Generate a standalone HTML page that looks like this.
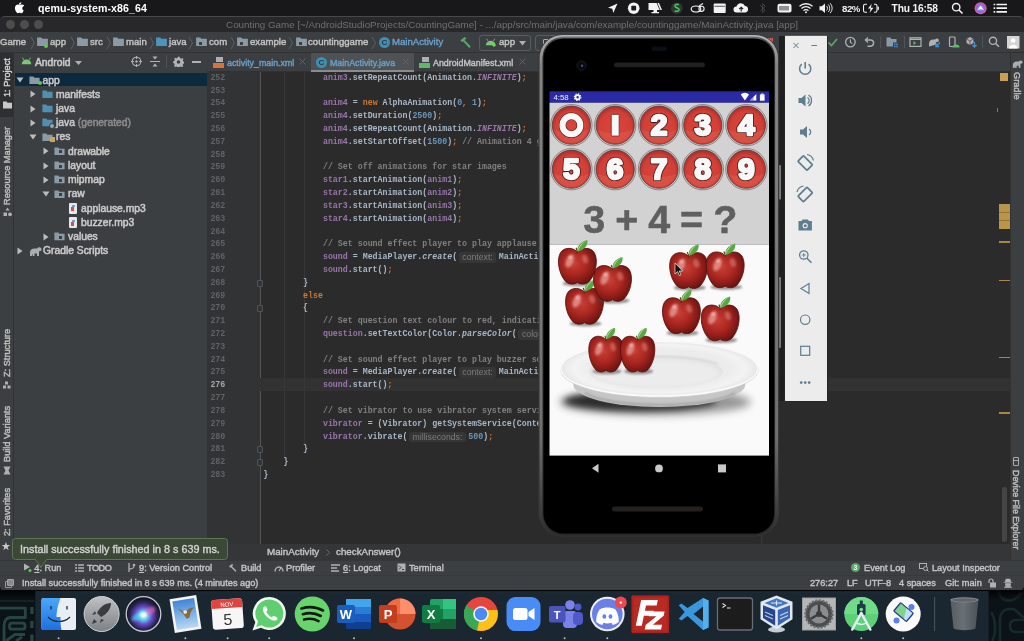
<!DOCTYPE html>
<html><head><meta charset="utf-8">
<style>
*{box-sizing:border-box;margin:0;padding:0}
html,body{width:1024px;height:641px;overflow:hidden;background:#0f1c22;font-family:"Liberation Sans",sans-serif;}
.abs{position:absolute}
#menubar{position:absolute;left:0;top:0;width:1024px;height:16px;background:#18181a;color:#fff;font-size:10.6px;font-weight:bold}
#win{position:absolute;left:0;top:16px;width:1024px;height:575px;background:#3c3f41;border-radius:5px 5px 6px 6px;overflow:hidden;border-top:1px solid #484848;z-index:0}
#title{position:absolute;left:0;top:0;width:1024px;height:15px;background:#28282a;border-top:0px solid #4a4a4a;color:#707070;font-size:9.8px;text-align:center;line-height:16px}
.tl{position:absolute;top:3px;width:9px;height:9px;border-radius:50%;background:#4d4d4d}
#nav{position:absolute;left:0;top:15px;width:1024px;height:20px;background:#3c3f41;border-top:1px solid #3c3f41;color:#bbb;font-size:9.2px;font-weight:bold}
.t{position:absolute;white-space:nowrap;font-weight:normal;color:#c4c4c4;font-size:9.2px;line-height:12px;-webkit-text-stroke:0.4px}
.tr{font-size:10.3px;-webkit-text-stroke:0.55px;color:#c8c8c8}
.nv{font-size:9.6px}
.vt{-webkit-text-stroke:0.45px;color:#bdbdbd;z-index:3}
#code{position:absolute;left:243.4px;top:54.8px;font-family:"Liberation Mono",monospace;font-size:8.29px;line-height:12.816px;color:#a9b7c6;white-space:pre;font-weight:bold}
#code i{color:#9876aa}#code em{font-style:italic}
.k{color:#cc7832}.n{color:#6897bb}.f{color:#9876aa}.c{color:#808080}
.h{font-family:"Liberation Sans",sans-serif;font-size:8.700px;color:#7c7c7c;background:#363636;border-radius:2.5px;font-weight:normal;display:inline-block;line-height:10.500px;height:10.500px;padding:0 3.500px;margin:0 2.5px 0 1.700px;vertical-align:top;position:relative;top:1px;white-space:nowrap}
#ln{position:absolute;left:207px;top:54.8px;width:18.3px;text-align:right;font-family:"Liberation Mono",monospace;font-size:8.29px;line-height:12.816px;color:#606366;white-space:pre;font-weight:bold}
#root{position:absolute;left:0;top:0;width:1024px;height:641px;overflow:hidden;will-change:transform;transform:translateZ(0)}
</style></head><body><div id="root">

<!-- wallpaper hints -->
<div class="abs" style="left:0;top:591px;width:1024px;height:50px;background:#0e1a20"></div>

<!-- MENUBAR -->
<div id="menubar">
  <svg class="abs" style="left:14px;top:2px" width="11" height="12" viewBox="0 0 170 200"><path fill="#fff" d="M150 69c-1 1-19 11-19 34 0 27 23 36 24 36 0 1-4 13-12 26-8 11-16 22-28 22s-15-7-29-7c-13 0-18 7-29 7s-19-10-28-23C18 149 9 124 9 101c0-38 25-58 49-58 13 0 24 9 32 9s20-9 35-9c6 0 26 1 39 20zM105 34c6-7 10-17 10-27 0-1 0-3-0-4-10 0-22 7-29 15-6 6-11 16-11 26 0 2 0 3 0 4 1 0 2 0 3 0 9 0 20-6 27-14z"/></svg>
  <span class="abs" style="left:38px;top:2px;line-height:13px;letter-spacing:0.1px">qemu-system-x86_64</span>
  <svg class="abs" style="left:600px;top:0" width="424" height="17" viewBox="600 0 424 17" fill="#f2f2f2">
<path d="M617.500 3.500l-9.500 4.200 4.300 1 1 4.300z"/>
<circle cx="633.700" cy="8.200" r="5.800"/><rect x="631.300" y="5.800" width="4.800" height="4.800" rx="0.800" fill="#18181a"/>
<path d="M648.500 3h10.500l3 7h-13.500zM653.500 10h3.500v2h2v1.200h-7.500v-1.200h2z"/><path d="M657 3l3 7" stroke="#18181a" stroke-width="0.800"/>
<circle cx="676.700" cy="8.200" r="5.800" fill="#2c3a30"/><path d="M678.800 4.800c-2.500-1.200-4.500 0.200-3.600 1.800 0.700 1.200 3.400 1.200 3.800 2.800 0.400 1.600-2 2.600-4.300 1.400" fill="none" stroke="#4fc56a" stroke-width="1.500"/>
<ellipse cx="696" cy="9" rx="4.800" ry="3" fill="none" stroke="#f2f2f2" stroke-width="1.200"/><circle cx="701.500" cy="8.800" r="2.600" fill="none" stroke="#f2f2f2" stroke-width="1.100"/><path d="M699 6l4-2.500" stroke="#f2f2f2" stroke-width="1.100"/>
<rect x="713.700" y="3.500" width="12" height="9.500" rx="1"/><path d="M714.500 6.300h10.500" stroke="#18181a" stroke-width="0.700"/>
<path d="M736.500 12.500a3 3 0 0 1 0-6 4.500 4.500 0 0 1 8.500-0.500 3.300 3.300 0 0 1 0.500 6.500z"/><path d="M741.200 11.500v-4M739.200 9.200l2-2 2 2" fill="none" stroke="#18181a" stroke-width="1.100"/>
<path d="M760.200 5.200l5 5-2.500 2.500v-9l2.500 2.500-5 5" fill="none" stroke="#4a4a4a" stroke-width="0.900"/>
<rect x="777.500" y="3.800" width="14" height="8.800" rx="2"/><path d="M780 6v4.500M782 6v4.500M784 6v4.500M786 6v4.500M788 6v4.500" stroke="#18181a" stroke-width="0.900"/>
<path d="M799.500 6.300a9.500 9.500 0 0 1 13 0M801.500 8.500a6.500 6.500 0 0 1 9 0M803.500 10.600a3.500 3.500 0 0 1 5 0" fill="none" stroke="#f2f2f2" stroke-width="1.300"/><circle cx="806" cy="12.300" r="1"/>
<path d="M819.500 6.200h2.300l3.200-2.700v9.500l-3.200-2.700h-2.300z"/><path d="M826.500 6a3 3 0 0 1 0 4.500M828.300 4.500a5.500 5.500 0 0 1 0 7.500M830.200 3.200a8 8 0 0 1 0 10" fill="none" stroke="#f2f2f2" stroke-width="0.900"/>
<rect x="863.500" y="4.200" width="13.500" height="8" rx="1.800" fill="none" stroke="#f2f2f2" stroke-width="1.100"/><rect x="877.600" y="6.500" width="1.300" height="3.400" rx="0.600"/><rect x="867" y="3" width="7" height="10.500" fill="#18181a"/><path d="M871.800 3.800l-3.800 4.800h2.600l-1 4.200 3.900-5h-2.700z"/>
<circle cx="956.200" cy="7.200" r="3.700" fill="none" stroke="#f2f2f2" stroke-width="1.400"/><path d="M959 10l3.500 3.500" stroke="#f2f2f2" stroke-width="1.600"/>
<defs><radialGradient id="siri" cx="0.5" cy="0.5" r="0.5"><stop offset="0" stop-color="#f4f4ff"/><stop offset="0.35" stop-color="#7a8cf0"/><stop offset="0.7" stop-color="#a45ad0"/><stop offset="1" stop-color="#d56a9a"/></radialGradient></defs>
<circle cx="980.600" cy="8.200" r="6" fill="url(#siri)"/><path d="M977 10.500l3.600-5 3.600 5-3.600-1.800z" fill="#fff" opacity="0.850"/>
<path d="M996.500 4.500h10.500M996.500 8.200h10.500M996.500 11.900h10.500" stroke="#f2f2f2" stroke-width="1.700"/><path d="M993.600 4.500h1.600M993.600 8.200h1.600M993.600 11.900h1.600" stroke="#f2f2f2" stroke-width="1.700"/>
<text x="842" y="11.800" font-family="Liberation Sans" font-weight="bold" font-size="9.600" letter-spacing="-0.400">82%</text>
<text x="891.600" y="12" font-family="Liberation Sans" font-weight="bold" font-size="10.200" letter-spacing="-0.150">Thu 16:58</text>
</svg>
</div>

<!-- WINDOW -->
<div id="win">
  <div id="title">Counting Game [~/AndroidStudioProjects/CountingGame] - .../app/src/main/java/com/example/countinggame/MainActivity.java [app]
    <div class="tl" style="left:6px"></div><div class="tl" style="left:20px"></div><div class="tl" style="left:34px"></div>
  </div>
  <div id="nav">
<svg width="0" height="0" style="position:absolute"><defs>
<symbol id="fold" viewBox="0 0 12 10"><path d="M0 0.5h4.6l1.2 1.5H12V10H0z"/></symbol>
<symbol id="chev" viewBox="0 0 6 14"><path d="M1 1l3.5 6L1 13" fill="none" stroke="#5e6163" stroke-width="1"/></symbol>
</defs></svg>
<span class="t nv" style="left:0px;top:3.300px">Game</span>
<svg class="abs" style="left:30px;top:3px" width="6" height="14"><use href="#chev"/></svg>
<svg class="abs" style="left:37px;top:4.300px" width="11" height="9" fill="#8b9aa5"><use href="#fold"/></svg><div class="abs" style="left:44px;top:11px;width:4px;height:4px;border-radius:50%;background:#62c554"></div>
<span class="t nv" style="left:50px;top:3.300px">app</span>
<svg class="abs" style="left:70px;top:3px" width="6" height="14"><use href="#chev"/></svg>
<svg class="abs" style="left:77px;top:4.300px" width="11" height="9" fill="#8b9aa5"><use href="#fold"/></svg>
<span class="t nv" style="left:90px;top:3.300px">src</span>
<svg class="abs" style="left:106px;top:3px" width="6" height="14"><use href="#chev"/></svg>
<svg class="abs" style="left:113px;top:4.300px" width="11" height="9" fill="#8b9aa5"><use href="#fold"/></svg>
<span class="t nv" style="left:126px;top:3.300px">main</span>
<svg class="abs" style="left:149px;top:3px" width="6" height="14"><use href="#chev"/></svg>
<svg class="abs" style="left:156px;top:4.300px" width="11" height="9" fill="#4f94bd"><use href="#fold"/></svg>
<span class="t nv" style="left:169px;top:3.300px">java</span>
<svg class="abs" style="left:188px;top:3px" width="6" height="14"><use href="#chev"/></svg>
<svg class="abs" style="left:196px;top:4.300px" width="11" height="9" fill="#8b9aa5"><use href="#fold"/></svg><div class="abs" style="left:199px;top:9px;width:3px;height:3px;background:#3c3f41"></div>
<span class="t nv" style="left:209px;top:3.300px">com</span>
<svg class="abs" style="left:230px;top:3px" width="6" height="14"><use href="#chev"/></svg>
<svg class="abs" style="left:237px;top:4.300px" width="11" height="9" fill="#8b9aa5"><use href="#fold"/></svg><div class="abs" style="left:240px;top:9px;width:3px;height:3px;background:#3c3f41"></div>
<span class="t nv" style="left:250px;top:3.300px">example</span>
<svg class="abs" style="left:288px;top:3px" width="6" height="14"><use href="#chev"/></svg>
<svg class="abs" style="left:296px;top:4.300px" width="11" height="9" fill="#8b9aa5"><use href="#fold"/></svg><div class="abs" style="left:299px;top:9px;width:3px;height:3px;background:#3c3f41"></div>
<span class="t nv" style="left:308px;top:3.300px">countinggame</span>
<svg class="abs" style="left:371px;top:3px" width="6" height="14"><use href="#chev"/></svg>
<div class="abs" style="left:379px;top:4px;width:11px;height:11px;border-radius:50%;background:#3f8fb5;color:#2f3a40;font-size:8px;font-weight:bold;text-align:center;line-height:11px">C</div>
<span class="t nv" style="left:392px;top:3.300px;color:#6a9fc9">MainActivity</span>
<svg class="abs" style="left:459px;top:3px" width="14" height="13" viewBox="0 0 14 13"><path d="M1.5 4.2L5.6 1l2 1.2-2.1 1.7 6.3 6.5-1.5 1.5L4.1 5.3 3 6.2z" fill="#59a869"/></svg>
<div class="abs" style="left:479px;top:2px;width:52px;height:16px;border:1px solid #5a5d5f;border-radius:3px"></div>
<svg class="abs" style="left:485px;top:5px" width="11.500" height="9" viewBox="0 0 14 11"><path d="M1 9a6 5.5 0 0 1 12 0z" fill="#7bc67b"/><path d="M3.5 3.5L2 1M10.5 3.5L12 1" stroke="#7bc67b" stroke-width="1"/><circle cx="11" cy="9" r="1.8" fill="#62e04f"/></svg>
<span class="t nv" style="left:499px;top:3.300px">app</span>
<svg class="abs" style="left:519px;top:8px" width="7" height="5"><path d="M0 0h7L3.5 4.5z" fill="#b0b0b0"/></svg>
<div class="abs" style="left:535px;top:2px;width:30px;height:16px;border:1px solid #5a5d5f;border-radius:3px"></div><div class="abs" style="left:765px;top:5px;width:8px;height:8px;background:#c75450"></div><div class="abs" style="left:543px;top:5.500px;width:6px;height:8.500px;border:1.200px solid #a8abad;border-radius:1px"></div>
<svg class="abs" style="left:824px;top:-1px" width="200" height="20" viewBox="824 32 200 20" fill="none" stroke="#afb1b3" stroke-width="1.300">
<path d="M828.500 42.500l3 3 5.500-6.500" stroke="#59a869" stroke-width="1.700"/>
<circle cx="850.400" cy="42.100" r="4.800"/><path d="M850.400 39.300v3l2 1.300" stroke-width="1.100"/>
<path d="M866 40h4.500a3 3 0 0 1 0 6.200h-3" stroke-width="1.400"/><path d="M868 37.500l-2.600 2.500 2.600 2.500" stroke-width="1.300"/>
<path d="M880.600 36v12M904.500 36v12M982.600 36v12" stroke="#515355" stroke-width="1"/>
<path d="M886.500 37.500h4l1 1.500h5v7.500h-10z" fill="#8b9aa5" stroke="none"/><rect x="893" y="42.500" width="5" height="5" fill="#3c3f41" stroke="none"/><path d="M894 43.500h1.500v1.500h-1.500zM896.200 43.500h1.500v1.500h-1.500zM894 45.700h1.500v1.500h-1.500zM896.200 45.700h1.500v1.500h-1.500z" fill="#4a90d0" stroke="none"/>
<rect x="910" y="37.800" width="11" height="8.600" stroke-width="1.200"/><path d="M910 39.300h11" stroke-width="1.400"/><path d="M913.300 41l3.200 2-3.200 2z" fill="#59a869" stroke="none"/>
<path d="M929 46.500v-3c0-2.500 2-4 4-4h2c.7-.9 1.900-1.200 2.800-.8.900.4 1.300 1.300 1 2.200-.3.700-.900 1-1.600 1h-1v2.500" fill="#afb1b3" stroke="none"/><path d="M940 42.500l-4 4M936 43.500v3h3" stroke="#3d95d8" stroke-width="1.400"/>
<rect x="949.500" y="37" width="5.500" height="9.500" rx="0.800" stroke-width="1.200"/><path d="M952.500 47.500a3.500 3 0 0 1 7 0z" fill="#59c068" stroke="none"/>
<path d="M966.500 39l3.500-2 3.500 2v4l-3.500 2-3.500-2z" fill="#afb1b3" stroke="none"/><path d="M966.500 39l3.500 2 3.500-2M970 41v4" stroke="#3c3f41" stroke-width="0.700"/><path d="M974.500 42v5M972.500 45l2 2 2-2" stroke="#3d95d8" stroke-width="1.300"/>
<circle cx="993" cy="40.800" r="3.600" stroke-width="1.400"/><path d="M995.700 43.500l3.300 3.300" stroke-width="1.600"/>
<rect x="1007" y="36" width="12.500" height="12.500" fill="#d4d4d4" stroke="none"/><circle cx="1013.200" cy="40.500" r="2.300" fill="#fff" stroke="none"/><path d="M1009 48.500c0-5 8.500-5 8.500 0z" fill="#fff" stroke="none"/>
</svg>
</div>

  <div class="abs" style="left:0;top:35px;width:1024px;height:1px;background:#323232;z-index:3"></div>
  <!-- LEFT STRIP -->
  <div class="abs" style="left:0;top:35px;width:14px;height:508px;background:#3c3f41;border-right:1px solid #323232;z-index:2"></div>
  <div class="abs" style="left:0;top:35px;width:13px;height:65px;background:#2d2f30;z-index:2"></div>
  <div class="t vt" style="left:0.500px;top:80px;transform:rotate(-90deg);transform-origin:0 0;color:#cfcfcf">1: Project</div>
  <svg class="abs" style="left:2.500px;top:84px;z-index:3" width="9" height="8" fill="#c8c8c8"><path d="M0 0.500h3.500l1 1.200H9V7.500H0z"/></svg><svg class="abs" style="left:2.500px;top:190px;z-index:3" width="9" height="10" fill="#b0b0b0"><path d="M4.500 0.500l2 3h-4zM0.500 5.500h3.500v3.500h-3.500z"/><circle cx="7" cy="7.300" r="1.900"/></svg><svg class="abs" style="left:3px;top:364px;z-index:3" width="8" height="8" fill="#b0b0b0"><path d="M0 4.500h3v3h-3zM4.500 4.500h3v3h-3zM2 0.500h3v3h-3z"/></svg><svg class="abs" style="left:3px;top:449px;z-index:3" width="8" height="9" fill="#b0b0b0"><path d="M0.500 0.500h7l-2 4 2 4h-7l2-4z"/></svg>
  <div class="t vt" style="left:0.500px;top:187.700px;transform:rotate(-90deg);transform-origin:0 0">Resource Manager</div>
  <div class="t vt" style="left:0.500px;top:360px;transform:rotate(-90deg);transform-origin:0 0">Z: Structure</div>
  <div class="t vt" style="left:0.500px;top:445px;transform:rotate(-90deg);transform-origin:0 0">Build Variants</div>
  <div class="t vt" style="left:0.500px;top:519px;transform:rotate(-90deg);transform-origin:0 0">2: Favorites</div>
  <div class="abs" style="left:1px;top:523px;color:#c8c8c8;font-size:11px;line-height:12px;z-index:3">&#9733;</div>

  <!-- PROJECT PANEL -->
  <div class="abs" style="left:15px;top:35px;width:192px;height:510px;background:#3c3f41"></div>
  <div class="abs" style="left:15px;top:56px;width:192px;height:13.300px;background:#0d293e"></div>
  <svg class="abs" style="left:21px;top:40px" width="11" height="8" viewBox="0 0 14 10"><path d="M1 9a6 6 0 0 1 12 0z" fill="#7bc67b"/><path d="M3.5 3.5L2 0.8M10.5 3.5L12 0.8" stroke="#7bc67b" stroke-width="1.2"/></svg>
  <span class="t tr" style="left:35px;top:39.500px">Android</span>
  <svg class="abs" style="left:75px;top:44px" width="7" height="4"><path d="M0 0h7L3.5 4z" fill="#b0b0b0"/></svg>
  <svg class="abs" style="left:131px;top:39px" width="11" height="11" viewBox="0 0 11 11"><circle cx="5.5" cy="5.5" r="4.3" fill="none" stroke="#afb1b3" stroke-width="1.1"/><circle cx="5.5" cy="5.5" r="1.2" fill="#afb1b3"/><path d="M5.5 0v3M5.5 8v3M0 5.5h3M8 5.5h3" stroke="#afb1b3" stroke-width="1.1"/></svg>
  <svg class="abs" style="left:150px;top:39px" width="10" height="11" viewBox="0 0 10 11"><path d="M0 5.5h10" stroke="#afb1b3" stroke-width="1.2"/><path d="M2.5 0.5h5L5 3.5zM2.5 10.5h5L5 7.5z" fill="#afb1b3"/></svg>
  <div class="abs" style="left:166px;top:38px;width:1px;height:13px;background:#515151"></div>
  <svg class="abs" style="left:173px;top:39px" width="11" height="11" viewBox="0 0 12 12"><path d="M6 0.5l1.2 0.2.4 1.5 1.3.7 1.5-.6.9 1-.6 1.5.5 1.2 1.3.6v1.3l-1.4.6-.5 1.2.6 1.4-1 .9-1.4-.6-1.3.5-.5 1.4H5.300l-.5-1.400-1.300-.500-1.400.600-.900-1 .600-1.400-.500-1.300L0 7.400V6l1.400-.500.500-1.300-.600-1.400 1-.900 1.400.600 1.200-.600z" fill="#afb1b3"/><circle cx="6" cy="6.600" r="1.900" fill="#3c3f41"/></svg>
  <div class="abs" style="left:192px;top:44px;width:9px;height:1.600px;background:#afb1b3"></div>
  <!-- TREE -->
<svg class="abs" style="left:16px;top:60.0px" width="8" height="6"><path d="M0.500 0.500h7L4 5.500z" fill="#bcbcbc"/></svg>
<svg class="abs" style="left:28.8px;top:58.5px" width="11" height="8.500" preserveAspectRatio="none" fill="#8b9aa5"><use href="#fold"/></svg>
<div class="abs" style="left:38px;top:64.0px;width:4px;height:4px;border-radius:50%;background:#62c554"></div>
<span class="t tr" style="left:42.500px;top:58.0px">app</span>
<svg class="abs" style="left:30px;top:73.2px" width="6" height="8"><path d="M0.500 0.500L5.500 4 0.500 7.500z" fill="#bcbcbc"/></svg>
<svg class="abs" style="left:41.8px;top:72.8px" width="11" height="8.500" preserveAspectRatio="none" fill="#4f8fb0"><use href="#fold"/></svg>
<span class="t tr" style="left:56px;top:71.5px">manifests</span>
<svg class="abs" style="left:30px;top:87.5px" width="6" height="8"><path d="M0.500 0.500L5.500 4 0.500 7.500z" fill="#bcbcbc"/></svg>
<svg class="abs" style="left:41.8px;top:87.0px" width="11" height="8.500" preserveAspectRatio="none" fill="#4f8fb0"><use href="#fold"/></svg>
<span class="t tr" style="left:56px;top:85.7px">java</span>
<svg class="abs" style="left:30px;top:101.8px" width="6" height="8"><path d="M0.500 0.500L5.500 4 0.500 7.500z" fill="#bcbcbc"/></svg>
<svg class="abs" style="left:41.8px;top:101.2px" width="11" height="8.500" preserveAspectRatio="none" fill="#4f8fb0"><use href="#fold"/></svg>
<div class="abs" style="left:49px;top:105.8px;width:6px;height:6px;border-radius:50%;background:#9aa7b0;border:1px solid #3c3f41"></div>
<span class="t tr" style="left:56px;top:99.9px">java <span style="color:#8a8a8a">(generated)</span></span>
<svg class="abs" style="left:29px;top:117.0px" width="8" height="6"><path d="M0.500 0.500h7L4 5.500z" fill="#bcbcbc"/></svg>
<svg class="abs" style="left:41.8px;top:115.5px" width="11" height="8.500" preserveAspectRatio="none" fill="#8b9aa5"><use href="#fold"/></svg>
<div class="abs" style="left:50px;top:120.0px;width:5px;height:5px;background:#c9a464"></div>
<span class="t tr" style="left:56px;top:114.2px">res</span>
<svg class="abs" style="left:43px;top:130.2px" width="6" height="8"><path d="M0.500 0.500L5.500 4 0.500 7.500z" fill="#bcbcbc"/></svg>
<svg class="abs" style="left:53.8px;top:129.8px" width="11" height="8.500" preserveAspectRatio="none" fill="#8b9aa5"><use href="#fold"/></svg>
<div class="abs" style="left:59px;top:133.2px;width:3px;height:3px;background:#3c3f41"></div>
<span class="t tr" style="left:68px;top:128.5px">drawable</span>
<svg class="abs" style="left:43px;top:144.5px" width="6" height="8"><path d="M0.500 0.500L5.500 4 0.500 7.500z" fill="#bcbcbc"/></svg>
<svg class="abs" style="left:53.8px;top:144.0px" width="11" height="8.500" preserveAspectRatio="none" fill="#8b9aa5"><use href="#fold"/></svg>
<div class="abs" style="left:59px;top:147.5px;width:3px;height:3px;background:#3c3f41"></div>
<span class="t tr" style="left:68px;top:142.7px">layout</span>
<svg class="abs" style="left:43px;top:158.8px" width="6" height="8"><path d="M0.500 0.500L5.500 4 0.500 7.500z" fill="#bcbcbc"/></svg>
<svg class="abs" style="left:53.8px;top:158.2px" width="11" height="8.500" preserveAspectRatio="none" fill="#8b9aa5"><use href="#fold"/></svg>
<div class="abs" style="left:59px;top:161.8px;width:3px;height:3px;background:#3c3f41"></div>
<span class="t tr" style="left:68px;top:156.9px">mipmap</span>
<svg class="abs" style="left:42px;top:174.0px" width="8" height="6"><path d="M0.500 0.500h7L4 5.500z" fill="#bcbcbc"/></svg>
<svg class="abs" style="left:53.8px;top:172.5px" width="11" height="8.500" preserveAspectRatio="none" fill="#8b9aa5"><use href="#fold"/></svg>
<div class="abs" style="left:59px;top:176.0px;width:3px;height:3px;background:#3c3f41"></div>
<span class="t tr" style="left:68px;top:171.2px">raw</span>
<div class="abs" style="left:69px;top:185.8px;width:8px;height:11px;background:#e8e8ea;border-radius:1px"></div><div class="abs" style="left:71px;top:190.2px;width:3px;height:4px;background:#c75450"></div><div class="abs" style="left:72px;top:188.2px;width:3px;height:2px;background:#6f9fd8"></div>
<span class="t tr" style="left:81px;top:185.5px">applause.mp3</span>
<div class="abs" style="left:69px;top:200.0px;width:8px;height:11px;background:#e8e8ea;border-radius:1px"></div><div class="abs" style="left:71px;top:204.5px;width:3px;height:4px;background:#c75450"></div><div class="abs" style="left:72px;top:202.5px;width:3px;height:2px;background:#6f9fd8"></div>
<span class="t tr" style="left:81px;top:199.7px">buzzer.mp3</span>
<svg class="abs" style="left:43px;top:215.8px" width="6" height="8"><path d="M0.500 0.500L5.500 4 0.500 7.500z" fill="#bcbcbc"/></svg>
<svg class="abs" style="left:53.8px;top:215.2px" width="11" height="8.500" preserveAspectRatio="none" fill="#8b9aa5"><use href="#fold"/></svg>
<div class="abs" style="left:59px;top:218.8px;width:3px;height:3px;background:#3c3f41"></div>
<span class="t tr" style="left:68px;top:213.9px">values</span>
<svg class="abs" style="left:17px;top:230.0px" width="6" height="8"><path d="M0.500 0.500L5.500 4 0.500 7.500z" fill="#bcbcbc"/></svg>
<svg class="abs" style="left:29px;top:229.5px" width="13" height="10" viewBox="0 0 13 10"><path d="M1 9V5.500C1 3 3 1.500 5.500 1.500h2.500c.8-1 2.200-1.400 3.300-1 1 .4 1.500 1.500 1.200 2.500-.3.800-1 1.200-1.800 1.200l-.7 0V9H8V6.500H5.500V9H3.700V6.800L2.800 9z" fill="#a9aeb2"/></svg>
<span class="t tr" style="left:43px;top:228.2px">Gradle Scripts</span>

  <!-- EDITOR -->
  <div class="abs" style="left:207px;top:35px;width:803px;height:20px;background:#3c3f41;border-bottom:1px solid #323232"></div>
  <div class="abs" style="left:207px;top:55px;width:803px;height:477px;background:#2b2b2b"></div>
  <div class="abs" style="left:207px;top:55px;width:54px;height:477px;background:#313335;border-right:1px solid #555"></div>
  <div class="abs" style="left:260px;top:361.300px;width:750px;height:12.300px;background:#323232"></div>
  <div class="abs" style="left:207px;top:361.300px;width:54px;height:12.300px;background:#313335"></div>
  <div class="abs" style="left:284px;top:55px;width:1px;height:385.500px;background:#373737"></div>
  <div class="abs" style="left:304.300px;top:55px;width:1px;height:372px;background:#373737"></div>
  <div class="abs" style="left:761px;top:55px;width:1px;height:472px;background:#373737"></div>
  <div class="abs" style="left:257px;top:262.8px;width:6px;height:7px;background:#313335;border:1px solid #505254;border-radius:1px"></div><div class="abs" style="left:257px;top:288.4px;width:6px;height:7px;background:#313335;border:1px solid #505254;border-radius:1px"></div><div class="abs" style="left:257px;top:429.4px;width:6px;height:7px;background:#313335;border:1px solid #505254;border-radius:1px"></div><div class="abs" style="left:257px;top:442.2px;width:6px;height:7px;background:#313335;border:1px solid #505254;border-radius:1px"></div>
  <div id="ln">252
253
254
255
256
257
258
259
260
261
262
263
264
265
266
267
268
269
270
271
272
273
274
275
<span style="color:#a7a7a7">276</span>
277
278
279
280
281
282
283</div>
  <div id="code">                <span class="f">anim3</span>.setRepeatCount(Animation.<i>INFINITE</i>)<span class="k">;</span>

                <span class="f">anim4</span> = <span class="k">new</span> AlphaAnimation(<span class="n">0</span><span class="k">,</span> <span class="n">1</span>)<span class="k">;</span>
                <span class="f">anim4</span>.setDuration(<span class="n">2500</span>)<span class="k">;</span>
                <span class="f">anim4</span>.setRepeatCount(Animation.<i>INFINITE</i>)<span class="k">;</span>
                <span class="f">anim4</span>.setStartOffset(<span class="n">1500</span>)<span class="k">;</span> <span class="c">// Animation 4 goes</span>

                <span class="c">// Set off animations for star images</span>
                <span class="f">star1</span>.startAnimation(<span class="f">anim1</span>)<span class="k">;</span>
                <span class="f">star2</span>.startAnimation(<span class="f">anim2</span>)<span class="k">;</span>
                <span class="f">star3</span>.startAnimation(<span class="f">anim3</span>)<span class="k">;</span>
                <span class="f">star4</span>.startAnimation(<span class="f">anim4</span>)<span class="k">;</span>

                <span class="c">// Set sound effect player to play applause sound</span>
                <span class="f">sound</span> = MediaPlayer.<em>create</em>(<span class="h">context:</span>MainActivity
                <span class="f">sound</span>.start()<span class="k">;</span>
            }
            <span class="k">else</span>
            {
                <span class="c">// Set question text colour to red, indicating</span>
                <span class="f">question</span>.setTextColor(Color.<em>parseColor</em>(<span class="h">colorString:</span>

                <span class="c">// Set sound effect player to play buzzer sound</span>
                <span class="f">sound</span> = MediaPlayer.<em>create</em>(<span class="h">context:</span>MainActivity
                <span class="f">sound</span>.start()<span class="k">;</span>

                <span class="c">// Set vibrator to use vibrator system service</span>
                <span class="f">vibrator</span> = (Vibrator) getSystemService(Context.
                <span class="f">vibrator</span>.vibrate(<span class="h">milliseconds:</span><span class="n">500</span>)<span class="k">;</span>
            }
        }
    }</div>
  <!-- tabs -->
  <div class="abs" style="left:310.500px;top:35px;width:103px;height:20px;background:#4e5254;border-bottom:2px solid #8a8d8f"></div>
  <span class="t" style="left:227px;top:39.500px;font-size:8.850px;color:#6a9fc9">activity_main.xml</span>
  <span class="t" style="left:330px;top:39.500px;font-size:8.850px;color:#6a9fc9">MainActivity.java</span>
  <span class="t" style="left:433px;top:39.500px;font-size:8.850px">AndroidManifest.xml</span>
  <div class="abs" style="left:316px;top:39.500px;width:11px;height:11px;border-radius:50%;background:#3f8fb5;color:#2f3a40;font-size:8px;font-weight:bold;text-align:center;line-height:11px">C</div>
  <svg class="abs" style="left:299px;top:41px" width="7" height="7"><path d="M0.500 0.500l6 6M6.500 0.500l-6 6" stroke="#646464" stroke-width="0.900"/></svg>
  <svg class="abs" style="left:402px;top:41px" width="7" height="7"><path d="M0.500 0.500l6 6M6.500 0.500l-6 6" stroke="#646464" stroke-width="0.900"/></svg>
  <svg class="abs" style="left:519px;top:41px" width="7" height="7"><path d="M0.500 0.500l6 6M6.500 0.500l-6 6" stroke="#646464" stroke-width="0.900"/></svg>
  <div class="abs" style="left:213px;top:45.500px;width:11px;height:5px;background:#d8743a"></div>
  <div class="abs" style="left:216px;top:40px;width:6.500px;height:5px;background:#aab0b5"></div>
  <div class="abs" style="left:419px;top:45.500px;width:11px;height:5px;background:#5fb865"></div>
  <div class="abs" style="left:422px;top:40px;width:6.500px;height:5px;background:#aab0b5"></div>

  <!-- RIGHT STRIP -->
  <div class="abs" style="left:1009.500px;top:35px;width:14.500px;height:508px;background:#3c3f41;border-left:1px solid #323232;z-index:2"></div>
  <div class="t vt" style="left:1022.500px;top:55px;transform:rotate(90deg);transform-origin:0 0">Gradle</div>
  <svg class="abs" style="left:1011.500px;top:43px;z-index:3" width="11" height="9" viewBox="0 0 13 10"><path d="M1 9V5.500C1 3 3 1.500 5.500 1.500h2.500c.8-1 2.200-1.400 3.300-1 1 .4 1.500 1.500 1.200 2.500-.3.800-1 1.200-1.800 1.200l-.7 0V9H8V6.500H5.500V9H3.700V6.800L2.800 9z" fill="#a9aeb2"/></svg>
  <div class="t vt" style="left:1022.300px;top:453px;font-size:8.900px;transform:rotate(90deg);transform-origin:0 0">Device File Explorer</div>
  <div class="abs" style="left:1013.300px;top:440.300px;width:6px;height:9px;border:1px solid #a9aeb2;border-radius:1px;z-index:3"></div><div class="abs" style="left:1014.300px;top:443px;width:4px;height:1px;background:#a9aeb2;z-index:3"></div>
  <!-- marker strip -->
  <div class="abs" style="left:1000px;top:56px;width:8px;height:8px;background:#c9a04f"></div>
  <div class="abs" style="left:996.500px;top:90.500px;width:1px;height:4px;background:#777"></div>
  <div class="abs" style="left:999px;top:186.500px;width:10.500px;height:25.500px;background:#b9954a"></div>
  <div class="abs" style="left:999px;top:194.500px;width:10.500px;height:1px;background:#8f753b"></div>
  <div class="abs" style="left:999px;top:203px;width:10.500px;height:1px;background:#8f753b"></div>
  <div class="abs" style="left:999px;top:224px;width:10.500px;height:1.500px;background:#a88744"></div>
  <div class="abs" style="left:999px;top:262.700px;width:10.500px;height:1.500px;background:#a88744"></div>
  <div class="abs" style="left:999px;top:339.900px;width:10.500px;height:1.500px;background:#a88744"></div>
  <div class="abs" style="left:999px;top:395px;width:10.500px;height:1.500px;background:#a88744"></div>
  <div class="abs" style="left:1002px;top:470px;width:5px;height:55px;border-radius:2.500px;background:#454545"></div>
  <!-- bottom -->
  <div class="abs" style="left:14px;top:527px;width:996px;height:16px;background:#343638"></div>
  <div class="abs" style="left:0;top:543px;width:1024px;height:16px;background:#3c3f41;border-top:1px solid #343638"></div>
  <div class="abs" style="left:0;top:558px;width:1024px;height:16px;background:#3c3f41;border-top:1px solid #37393b"></div>
  <span class="t" style="left:267px;top:529px;font-size:9.800px">MainActivity</span>
  <svg class="abs" style="left:326px;top:532px" width="4" height="7"><path d="M0.500 0.500l3 3-3 3" fill="none" stroke="#6a6a6a"/></svg>
  <span class="t" style="left:336px;top:529px;font-size:9.800px">checkAnswer()</span>
  <!-- balloon -->
  <div class="abs" style="left:11.700px;top:520.700px;width:216.800px;height:22.300px;background:#3c4836;border:1px solid #5f7355;border-radius:3.500px;z-index:4"></div>
  <svg class="abs" style="left:34.500px;top:542px;z-index:4" width="12" height="9"><path d="M0 0l6 8L12 0" fill="#3c4836" stroke="#5f7355"/><path d="M0.800 0h10.400" stroke="#3c4836" stroke-width="2.200"/></svg>
  <span class="t" style="left:20px;top:526px;font-size:10.800px;color:#d0d0d0;z-index:5">Install successfully finished in 8 s 639 ms.</span>
  <!-- tool window bar -->
  <svg class="abs" style="left:23px;top:546px" width="9" height="9"><path d="M1 0.500v7l6-3.500z" fill="#afb1b3"/><circle cx="7" cy="7.500" r="1.500" fill="#62c554"/></svg>
  <span class="t" style="left:34.300px;top:545px"><u>4</u>: Run</span>
  <svg class="abs" style="left:75px;top:547px" width="9" height="8"><path d="M0 1h2M3 1h6M0 4h2M3 4h6M0 7h2M3 7h6" stroke="#afb1b3" stroke-width="1.300"/></svg>
  <span class="t" style="left:87px;top:545px;letter-spacing:-0.500px">TODO</span>
  <svg class="abs" style="left:127px;top:546px" width="9" height="10"><path d="M2 0v9M2 6c4 0 5-1 5-4" fill="none" stroke="#afb1b3" stroke-width="1.300"/><circle cx="7" cy="2" r="1.300" fill="#afb1b3"/></svg>
  <span class="t" style="left:139px;top:545px"><u>9</u>: Version Control</span>
  <svg class="abs" style="left:228px;top:546px" width="10" height="10" viewBox="0 0 14 13"><path d="M1.500 4.200L5.600 1l2 1.200-2.100 1.700 6.300 6.500-1.500 1.500L4.100 5.300 3 6.200z" fill="#afb1b3"/></svg>
  <span class="t" style="left:241px;top:545px">Build</span>
  <svg class="abs" style="left:274px;top:547px" width="10" height="8"><path d="M1 7.500a4 4.500 0 0 1 8 0" fill="none" stroke="#afb1b3" stroke-width="1.400"/><path d="M5 7l2.500-4" stroke="#afb1b3" stroke-width="1.300"/></svg>
  <span class="t" style="left:286px;top:545px">Profiler</span>
  <svg class="abs" style="left:331px;top:547px" width="9" height="8"><path d="M0 1h9M0 4h6M0 7h8" stroke="#afb1b3" stroke-width="1.400"/></svg>
  <span class="t" style="left:343px;top:545px"><u>6</u>: Logcat</span>
  <svg class="abs" style="left:397px;top:546px" width="9" height="9"><rect x="0.500" y="0.500" width="8" height="8" fill="#afb1b3"/><path d="M2 2.500l2 2-2 2M5 6.500h2" stroke="#3c3f41" fill="none"/></svg>
  <span class="t" style="left:409px;top:545px">Terminal</span>
  <div class="abs" style="left:851px;top:546px;width:9px;height:9px;border-radius:50%;background:#59a869;color:#fff;font-size:7px;font-weight:bold;line-height:9px;text-align:center">3</div>
  <span class="t" style="left:864px;top:545px">Event Log</span>
  <svg class="abs" style="left:919px;top:546px" width="10" height="9"><rect x="0.500" y="0.500" width="7" height="5" fill="none" stroke="#afb1b3"/><circle cx="6.500" cy="5.500" r="2" fill="#3c3f41" stroke="#afb1b3"/><path d="M8 7l1.500 1.500" stroke="#afb1b3"/></svg>
  <span class="t" style="left:932px;top:545px">Layout Inspector</span>
  <!-- status bar -->
  <div class="abs" style="left:4.500px;top:563.500px;width:7px;height:7px;border:1px solid #9a9a9a;border-radius:1px"></div><div class="abs" style="left:6.500px;top:561.500px;width:7px;height:7px;background:#8a8a8a;border:1px solid #a4a4a4;border-radius:1px"></div>
  <span class="t" style="left:22px;top:560px">Install successfully finished in 8 s 639 ms. (4 minutes ago)</span>
  <span class="t" style="left:810px;top:560px">276:27</span>
  <span class="t" style="left:847px;top:560px">LF</span>
  <span class="t" style="left:865px;top:560px">UTF-8</span>
  <span class="t" style="left:899px;top:560px">4 spaces</span>
  <span class="t" style="left:945px;top:560px">Git: main</span>
  <svg class="abs" style="left:988px;top:561px" width="9" height="10"><rect x="2" y="4.500" width="6" height="5" fill="#afb1b3"/><path d="M1 5V3a2 2 0 0 1 4 0v2" fill="none" stroke="#afb1b3" stroke-width="1.200"/></svg>
  <svg class="abs" style="left:1003px;top:561px" width="10" height="10"><path d="M2 4l1-3h4l1 3zM0.500 4.500h9M2.500 5.500h5v2h-5zM1.500 9.500c0-2 7-2 7 0z" fill="#afb1b3" stroke="#afb1b3" stroke-width="0.600"/></svg>
</div>

<!-- EMULATOR -->
<svg class="abs" style="left:0;top:0" width="1024" height="641" viewBox="0 0 1024 641">
<defs>
<radialGradient id="rg" cx="0.5" cy="0.55" r="0.55"><stop offset="0" stop-color="#da463d"/><stop offset="0.75" stop-color="#d23f37"/><stop offset="1" stop-color="#a82d28"/></radialGradient>
<g id="nbtn"><circle r="20.700" fill="#c8c8c8" stroke="#6a6a6a" stroke-width="0.700"/><circle r="19.100" fill="url(#rg)" stroke="#5a3a38" stroke-width="0.800"/><path d="M-17.500 4a18 18 0 0 0 35 0c-8 5-27 5-35 0z" fill="#e96a58" opacity="0.350"/></g>
<radialGradient id="ag" cx="0.42" cy="0.42" r="0.65"><stop offset="0" stop-color="#c94036"/><stop offset="0.5" stop-color="#a92620"/><stop offset="1" stop-color="#64110f"/></radialGradient><filter id="b1" x="-50%" y="-50%" width="200%" height="200%"><feGaussianBlur stdDeviation="1.100"/></filter><filter id="b5" x="-30%" y="-80%" width="160%" height="260%"><feGaussianBlur stdDeviation="4.500"/></filter><filter id="b3" x="-30%" y="-80%" width="160%" height="260%"><feGaussianBlur stdDeviation="3"/></filter><filter id="b2" x="-30%" y="-50%" width="160%" height="200%"><feGaussianBlur stdDeviation="2"/></filter>
<g id="apple">
<ellipse cx="1" cy="17.500" rx="14.500" ry="3" fill="#444" opacity="0.550" filter="url(#b1)"/>
<path d="M0,-13.500C-3,-18.500 -12,-19.500 -15.500,-13C-19,-6 -17,7 -11.500,14.500C-8.500,19 -3,19 0,16.500C3,19 8.500,19 11.500,14.500C17,7 19,-6 15.500,-13C12,-19.500 3,-18.500 0,-13.500Z" fill="url(#ag)" stroke="#560e0b" stroke-width="0.800"/>
<ellipse cx="-7" cy="-5" rx="3.400" ry="7" fill="#ffd8d0" opacity="0.500" transform="rotate(20 -7 -5)" filter="url(#b1)"/>
<ellipse cx="7" cy="-7" rx="2.600" ry="4.500" fill="#ffc0b8" opacity="0.350" transform="rotate(-15 7 -7)" filter="url(#b1)"/>
<circle cx="-6.500" cy="-8.500" r="1.300" fill="#fff" opacity="0.700" filter="url(#b1)"/>
<path d="M0-12.500c0-2.500 -0.300-4 -1.200-5.500" stroke="#5a3416" stroke-width="1.100" fill="none"/>
<path d="M0.500 -14.500c-1.500-5 2-9.500 8.500-11.500 1 5.500-2.500 9.500-8.500 11.500z" fill="#58a645"/>
<path d="M0.500 -14.500c0-5 3-9 8.500-11.500-2.500 1.500-6 4.500-8.500 11.500z" fill="#a2da84"/>
</g>
<radialGradient id="pg" cx="0.5" cy="0.5" r="0.5"><stop offset="0" stop-color="#ececec"/><stop offset="0.7" stop-color="#ececec"/><stop offset="0.86" stop-color="#f3f3f3"/><stop offset="1" stop-color="#e6e6e6"/></radialGradient>
<radialGradient id="sh" cx="0.5" cy="0.5" r="0.5"><stop offset="0" stop-color="#000" stop-opacity="0.600"/><stop offset="0.6" stop-color="#000" stop-opacity="0.350"/><stop offset="1" stop-color="#000" stop-opacity="0"/></radialGradient>
<linearGradient id="rim2" x1="0" y1="0" x2="0" y2="1"><stop offset="0" stop-color="#7e7e7e"/><stop offset="0.006" stop-color="#4a4a4a"/><stop offset="0.04" stop-color="#303030"/><stop offset="1" stop-color="#262626"/></linearGradient><linearGradient id="rimv" x1="0" y1="0" x2="0" y2="1"><stop offset="0" stop-color="#b4b4b4"/><stop offset="0.06" stop-color="#848484"/><stop offset="0.8" stop-color="#707070"/><stop offset="0.96" stop-color="#3a3a3a"/><stop offset="1" stop-color="#2a2a2a"/></linearGradient><linearGradient id="rim" x1="0" x2="1"><stop offset="0" stop-color="#8a8a8a"/><stop offset="0.02" stop-color="#3a3a3a"/><stop offset="0.98" stop-color="#3a3a3a"/><stop offset="1" stop-color="#8a8a8a"/></linearGradient>
</defs>
<!-- phone body -->
<rect x="779" y="36" width="5.500" height="365" fill="#1f1f1f"/>
<rect x="778" y="165" width="3" height="34.500" rx="1" fill="#7c7c7c"/><rect x="778" y="277" width="3" height="71" rx="1" fill="#7c7c7c"/>
<rect x="538.400" y="34.400" width="240.800" height="502" rx="24" ry="24" fill="#383838"/>
<rect x="539.600" y="35" width="238.400" height="500.800" rx="23" ry="23" fill="url(#rimv)"/>
<rect x="542.500" y="36.600" width="232.600" height="498" rx="20.800" ry="20.800" fill="url(#rim2)"/>
<rect x="543.500" y="38.400" width="230.600" height="495.200" rx="19.800" ry="19.800" fill="#000"/>
<rect x="651.500" y="46.500" width="15.500" height="4.500" rx="2.200" fill="#0b0d15"/>
<rect x="614" y="62.500" width="91" height="4.800" rx="2.400" fill="#23211f"/>
<circle cx="581.500" cy="65.500" r="4.600" fill="#0a0a0a" stroke="#20242c" stroke-width="0.800"/><circle cx="582" cy="65.800" r="1.200" fill="#3b4d9c"/>
<rect x="612" y="506.500" width="91" height="5" rx="2.500" fill="#23211f"/>
<!-- screen -->
<rect x="549.500" y="91.300" width="219.500" height="11.400" fill="#2a2aa6"/>
<rect x="549.500" y="102.700" width="219.500" height="142" fill="#d2d2d2"/>
<rect x="549.500" y="244.600" width="219.500" height="211" fill="#fafafa"/>
<text x="553.400" y="100.400" font-family="Liberation Sans" font-size="7.900" fill="#f0f0f8">4:58</text>
<circle cx="577.600" cy="97.200" r="2.100" fill="none" stroke="#fff" stroke-width="1.700"/><circle cx="577.600" cy="97.200" r="3.300" fill="none" stroke="#fff" stroke-width="1.100" stroke-dasharray="1.300 1.290"/>
<path d="M740.800 94.600a5.600 5.600 0 0 1 8.200 0l-4.100 5.900z" fill="#fff"/>
<path d="M756.300 94v6.500h-6.500z" fill="#fff"/><path d="M753.600 96.700v3.800h-3.800z" fill="#2a2aa6" opacity="0.450"/>
<rect x="759.900" y="94.400" width="4.700" height="6.300" fill="#fff"/><rect x="761.200" y="93.500" width="2.100" height="1.200" fill="#fff"/>
<use href="#nbtn" x="571.4" y="125.2"/><ellipse cx="571.4" cy="125.2" rx="8.900" ry="9.100" fill="none" stroke="#4a2422" stroke-width="7.300"/><ellipse cx="571.4" cy="125.2" rx="8.900" ry="9.100" fill="none" stroke="#f8f8f8" stroke-width="6.100"/><use href="#nbtn" x="615.2" y="125.2"/><rect x="611.3000000000001" y="114.4" width="7.800" height="21.600" rx="0.800" fill="#f8f8f8" stroke="#5a2a28" stroke-width="0.700"/><use href="#nbtn" x="659.0" y="125.2"/><text x="659.0" y="134.6" text-anchor="middle" font-family="Liberation Sans" font-weight="bold" font-size="30" stroke-linejoin="round" fill="#3e1c1a" stroke="#3e1c1a" stroke-width="4.200">2</text><text x="659.0" y="134.6" text-anchor="middle" font-family="Liberation Sans" font-weight="bold" font-size="30" stroke-linejoin="round" fill="#f8f8f8" stroke="#f8f8f8" stroke-width="2.500">2</text><use href="#nbtn" x="702.8" y="125.2"/><text x="702.8" y="134.6" text-anchor="middle" font-family="Liberation Sans" font-weight="bold" font-size="30" stroke-linejoin="round" fill="#3e1c1a" stroke="#3e1c1a" stroke-width="4.200">3</text><text x="702.8" y="134.6" text-anchor="middle" font-family="Liberation Sans" font-weight="bold" font-size="30" stroke-linejoin="round" fill="#f8f8f8" stroke="#f8f8f8" stroke-width="2.500">3</text><use href="#nbtn" x="746.4" y="125.2"/><text x="746.4" y="134.6" text-anchor="middle" font-family="Liberation Sans" font-weight="bold" font-size="30" stroke-linejoin="round" fill="#3e1c1a" stroke="#3e1c1a" stroke-width="4.200">4</text><text x="746.4" y="134.6" text-anchor="middle" font-family="Liberation Sans" font-weight="bold" font-size="30" stroke-linejoin="round" fill="#f8f8f8" stroke="#f8f8f8" stroke-width="2.500">4</text><use href="#nbtn" x="571.4" y="169.2"/><text x="571.4" y="178.6" text-anchor="middle" font-family="Liberation Sans" font-weight="bold" font-size="30" stroke-linejoin="round" fill="#3e1c1a" stroke="#3e1c1a" stroke-width="4.200">5</text><text x="571.4" y="178.6" text-anchor="middle" font-family="Liberation Sans" font-weight="bold" font-size="30" stroke-linejoin="round" fill="#f8f8f8" stroke="#f8f8f8" stroke-width="2.500">5</text><use href="#nbtn" x="615.2" y="169.2"/><text x="615.2" y="178.6" text-anchor="middle" font-family="Liberation Sans" font-weight="bold" font-size="30" stroke-linejoin="round" fill="#3e1c1a" stroke="#3e1c1a" stroke-width="4.200">6</text><text x="615.2" y="178.6" text-anchor="middle" font-family="Liberation Sans" font-weight="bold" font-size="30" stroke-linejoin="round" fill="#f8f8f8" stroke="#f8f8f8" stroke-width="2.500">6</text><use href="#nbtn" x="659.0" y="169.2"/><text x="659.0" y="178.6" text-anchor="middle" font-family="Liberation Sans" font-weight="bold" font-size="30" stroke-linejoin="round" fill="#3e1c1a" stroke="#3e1c1a" stroke-width="4.200">7</text><text x="659.0" y="178.6" text-anchor="middle" font-family="Liberation Sans" font-weight="bold" font-size="30" stroke-linejoin="round" fill="#f8f8f8" stroke="#f8f8f8" stroke-width="2.500">7</text><use href="#nbtn" x="702.8" y="169.2"/><text x="702.8" y="178.6" text-anchor="middle" font-family="Liberation Sans" font-weight="bold" font-size="30" stroke-linejoin="round" fill="#3e1c1a" stroke="#3e1c1a" stroke-width="4.200">8</text><text x="702.8" y="178.6" text-anchor="middle" font-family="Liberation Sans" font-weight="bold" font-size="30" stroke-linejoin="round" fill="#f8f8f8" stroke="#f8f8f8" stroke-width="2.500">8</text><use href="#nbtn" x="746.4" y="169.2"/><text x="746.4" y="178.6" text-anchor="middle" font-family="Liberation Sans" font-weight="bold" font-size="30" stroke-linejoin="round" fill="#3e1c1a" stroke="#3e1c1a" stroke-width="4.200">9</text><text x="746.4" y="178.6" text-anchor="middle" font-family="Liberation Sans" font-weight="bold" font-size="30" stroke-linejoin="round" fill="#f8f8f8" stroke="#f8f8f8" stroke-width="2.500">9</text>
<text x="660" y="233.200" text-anchor="middle" font-family="Liberation Sans" font-weight="bold" font-size="39.500" fill="#5f5f5f" stroke="#5f5f5f" stroke-width="0.500" letter-spacing="-0.500">3 + 4 = ?</text>
<!-- plate -->
<ellipse cx="655" cy="402" rx="96" ry="13" fill="#000" opacity="0.400" filter="url(#b5)"/>
<ellipse cx="640" cy="401" rx="76" ry="10" fill="#000" opacity="0.700" filter="url(#b3)"/>
<ellipse cx="659.300" cy="384.500" rx="86" ry="22.500" fill="#c6c6c6"/>
<path d="M585 393c25 16 125 16 150 0" fill="none" stroke="#9a9a9a" stroke-width="2.500" opacity="0.700" filter="url(#b1)"/>
<ellipse cx="659.300" cy="369.700" rx="99.300" ry="28" fill="#d2d2d2"/>
<ellipse cx="659.300" cy="368.700" rx="99.300" ry="28" fill="url(#pg)"/>
<ellipse cx="659.300" cy="368.700" rx="98.500" ry="27.300" fill="none" stroke="#fbfbfb" stroke-width="1.400"/>
<ellipse cx="656" cy="371.500" rx="67" ry="16.500" fill="#e4e4e4"/>
<ellipse cx="656" cy="373.500" rx="63" ry="14" fill="#ececec" filter="url(#b2)"/>
<path d="M600 364c30-10 90-10 118 0" fill="none" stroke="#d4d4d4" stroke-width="1.500" filter="url(#b1)"/>
<use href="#apple" transform="translate(577.4 265.9) scale(1.1 1)"/>
<use href="#apple" transform="translate(584.5 306) scale(1.1 1)"/>
<use href="#apple" transform="translate(612.5 283.1) scale(1.1 1)"/>
<use href="#apple" transform="translate(688.6 270.2) scale(1.1 1)"/>
<use href="#apple" transform="translate(725.2 269.5) scale(1.1 1)"/>
<use href="#apple" transform="translate(681.4 315.4) scale(1.1 1)"/>
<use href="#apple" transform="translate(720.2 322.6) scale(1.1 1)"/>
<use href="#apple" x="606" y="353.8"/>
<use href="#apple" x="637.6" y="353.8"/>
<!-- nav buttons -->
<path d="M598.500 463.800v9l-6.500-4.500z" fill="#c9c9c9"/>
<circle cx="659" cy="468.400" r="3.900" fill="#c9c9c9"/>
<rect x="718" y="464.400" width="8" height="8" fill="#c9c9c9"/>
<!-- cursor -->
<path d="M675 263v11l2.600-2.400 1.800 4 1.600-0.700-1.800-3.900h3.500z" fill="#111" stroke="#e8e8e8" stroke-width="0.700"/>
</svg>

<!-- SIDE TOOLBAR -->
<div class="abs" style="left:783.500px;top:34.500px;width:44.200px;height:367px;background:#ececec;border:1px solid #262626;border-top-color:#5a5a5a;border-radius:0 0 2px 2px"></div>
<svg class="abs" style="left:784px;top:35px" width="43" height="366" viewBox="784 35 43 366" fill="none" stroke="#5f7d8c" stroke-width="1.500">
<path d="M793.500 43l5 5M798.500 43l-5 5" stroke-width="1"/><path d="M811.500 45.500h5.500" stroke-width="1"/>
<path d="M805.200 62v6.500" stroke-width="1.600"/><path d="M801.800 64.200a5.600 5.600 0 1 0 6.800 0" stroke-width="1.500"/>
<path d="M798.500 98v5h3l4 3.500v-12l-4 3.500z" fill="#5f7d8c" stroke="none"/><path d="M807.500 97.500a3.500 3.500 0 0 1 0 6M808.500 95a6.500 6.500 0 0 1 0 11" stroke-width="1.300"/>
<path d="M800 129.500v5h3l4 3.500v-12l-4 3.500z" fill="#5f7d8c" stroke="none"/><path d="M809 129a3.500 3.500 0 0 1 0 6" stroke-width="1.300"/>
<g transform="translate(805.200 163) rotate(-45)"><rect x="-4" y="-6.500" width="8" height="13" rx="1" stroke-width="1.700"/></g><path d="M807 154.500a8 8 0 0 1 6.500 6" stroke-width="1.200"/>
<g transform="translate(805.200 194.500) rotate(45)"><rect x="-4" y="-6.500" width="8" height="13" rx="1" stroke-width="1.700"/></g><path d="M803.500 186a8 8 0 0 0 -6.500 6" stroke-width="1.200"/>
<path d="M798.500 221h3l1-1.500h5.400l1 1.500h3v9.500h-13.400z" fill="#5f7d8c" stroke="none"/><circle cx="805.200" cy="225.700" r="2.600" fill="#ececec" stroke="none"/><circle cx="805.200" cy="225.700" r="1.500" fill="#5f7d8c" stroke="none"/>
<circle cx="803.800" cy="255" r="4.200" stroke-width="1.300"/><path d="M807 258.200l4.500 4.500" stroke-width="1.500"/><path d="M801.800 255h4M803.800 253v4" stroke-width="0.900"/>
<path d="M809 283.500v10l-8-5z" stroke-width="1.200"/>
<circle cx="805.200" cy="319.700" r="4.700" stroke-width="1.200"/>
<rect x="800.700" y="346.300" width="9" height="9" stroke-width="1.200"/>
<circle cx="801.200" cy="382.600" r="1.350" fill="#5f7d8c" stroke="none"/><circle cx="805.200" cy="382.600" r="1.350" fill="#5f7d8c" stroke="none"/><circle cx="809.200" cy="382.600" r="1.350" fill="#5f7d8c" stroke="none"/>
</svg>

<!-- DOCK -->
<svg class="abs" style="left:0;top:588px" width="1024" height="53" viewBox="0 588 1024 53">
<defs>
<linearGradient id="fb" x1="0" y1="0" x2="0" y2="1"><stop offset="0" stop-color="#4aa8f8"/><stop offset="1" stop-color="#1f6fe0"/></linearGradient>
<linearGradient id="lp" x1="0" y1="0" x2="0" y2="1"><stop offset="0" stop-color="#bfc1c4"/><stop offset="1" stop-color="#7d8084"/></linearGradient>
<radialGradient id="sr" cx="0.5" cy="0.55" r="0.5"><stop offset="0" stop-color="#f0f6ff"/><stop offset="0.25" stop-color="#5ad0e8"/><stop offset="0.5" stop-color="#6a4ad0"/><stop offset="0.8" stop-color="#26264a"/><stop offset="1" stop-color="#15152a"/></radialGradient>
<linearGradient id="sky" x1="0" y1="0" x2="0" y2="1"><stop offset="0" stop-color="#3f86d8"/><stop offset="1" stop-color="#b8d8f4"/></linearGradient>
<linearGradient id="tr" x1="0" y1="0" x2="1" y2="0"><stop offset="0" stop-color="#666c70"/><stop offset="0.45" stop-color="#7c8286"/><stop offset="1" stop-color="#585d61"/></linearGradient>
</defs>
<rect x="0" y="590" width="1024" height="51" fill="#0c1318"/>
<g stroke="#274643" stroke-width="2.800" fill="none" stroke-linejoin="round">
<path d="M0 608.200H25.300V617.500H11C6 617.500 4 621.500 4 626V641"/>
<rect x="9.500" y="623.200" width="15.500" height="6" rx="2.500"/>
<path d="M6 641l9-6.500h10M16 641l6-4"/>
</g>
<path d="M0 601h34" stroke="#16282a" stroke-width="1.500"/>
<g fill="#274643"><rect x="30.300" y="607" width="3.200" height="7"/><rect x="30.300" y="621" width="3.200" height="7"/><rect x="30.300" y="634.500" width="3.200" height="7"/></g>
<g stroke="#172a2b" stroke-width="2.600" fill="none">
<path d="M998 590c1 6 5 10.500 11 10.500s9-3.500 12-9"/>
<path d="M1000 641V620c0-7 4-11 10-11h4l10 9"/>
<path d="M1024 620h-8c-4 0-6 2.500-6 6s2 6 6 6h8"/>
<path d="M991 612c3 4 4 10 4 16s-1 10-3 13"/>
<path d="M1017 598l7-6"/>
</g>
<linearGradient id="wsh" x1="0" y1="0" x2="0" y2="1"><stop offset="0" stop-color="#000" stop-opacity="0.850"/><stop offset="1" stop-color="#000" stop-opacity="0"/></linearGradient>
<rect x="0" y="590" width="1024" height="11" fill="url(#wsh)"/>
<rect x="35.300" y="591.500" width="953.300" height="54" fill="#1a2630"/>
<path d="M35.300 591.800h953.300" stroke="#27333b" stroke-width="0.800"/>
<!-- finder -->
<rect x="41.500" y="598" width="34.500" height="32" rx="2" fill="#e9eef4"/><path d="M41.500 600a2 2 0 0 1 2-2h17c-3 8-4 14-4 19h4c0 5 0 9 1 13h-18a2 2 0 0 1-2-2z" fill="url(#fb)"/>
<path d="M48 617c6 6 16 6 22 0" stroke="#1d2b3a" stroke-width="1.200" fill="none"/><path d="M51 606v3.500M67 606v3.500" stroke="#1d2b3a" stroke-width="1.300"/>
<!-- launchpad -->
<circle cx="101.600" cy="614" r="17.500" fill="url(#lp)" stroke="#d0d2d4" stroke-width="1"/>
<path d="M111 603c-6 0-11 4-14 10l4 4c6-3 10-8 10-14zM96 614l-4 1 3-4zM101 619l-1 4 4-3zM94 619l-2 5 5-2z" fill="#3a3c40"/>
<!-- siri -->
<circle cx="143.500" cy="614" r="17.300" fill="url(#sr)" stroke="#c8c8d0" stroke-width="1.300"/>
<ellipse cx="150" cy="611" rx="6" ry="3.500" fill="#ff6ab8" opacity="0.550" transform="rotate(-30 150 611)" filter="url(#b1)"/><ellipse cx="137" cy="617" rx="6" ry="3" fill="#4ae0f0" opacity="0.600" transform="rotate(-30 137 617)" filter="url(#b1)"/><ellipse cx="143.500" cy="614.500" rx="3.500" ry="2.500" fill="#fff" opacity="0.900" filter="url(#b1)"/>
<!-- mail -->
<g transform="rotate(-9 185.400 614)"><rect x="172" y="597" width="27" height="34" fill="#f4f4f0"/><rect x="174.500" y="599.500" width="22" height="29" fill="url(#sky)"/><path d="M178 607c4 2 6 4 7 7 2-4 6-6 10-5-3 2-5 5-6 9l-3 1c-2-5-5-9-8-12z" fill="#8a6a3a"/><circle cx="185.500" cy="612" r="1.800" fill="#f0ece0"/></g>
<!-- calendar -->
<g transform="rotate(-4 227.600 614)"><rect x="212" y="599" width="31" height="30" rx="3" fill="#f6f6f6"/><path d="M212 602a3 3 0 0 1 3-3h25a3 3 0 0 1 3 3v6h-31z" fill="#e0443c"/><text x="227.500" y="606.500" text-anchor="middle" font-family="Liberation Sans" font-size="6" fill="#fff">NOV</text><text x="227.500" y="625" text-anchor="middle" font-family="Liberation Sans" font-size="16" fill="#333">5</text></g>
<!-- whatsapp -->
<path d="M269.500 597a16.500 16.500 0 1 1-8.500 30.700l-8.500 2.800 2.800-8.300a16.500 16.500 0 0 1 14.200-25.200z" fill="#f2f6f2"/><path d="M269.500 599.500a14 14 0 1 1-7.800 25.700l-5.500 1.800 1.800-5.400a14 14 0 0 1 11.500-22.100z" fill="#5fce6f"/>
<path d="M263.500 607c1-1.200 2.200-1 2.800 0l1.200 2.600c.3.800-.8 1.500-1.200 2.200 1.200 2.500 3 4.200 5.500 5.400.8-.6 1.500-1.600 2.300-1.300l2.600 1.300c1 .6 1 1.700 0 2.700-4 3.500-16.500-6.500-13.200-12.900z" fill="#fff"/>
<!-- spotify -->
<circle cx="312.300" cy="614" r="17.600" fill="#68d56c"/><path d="M301.500 608.500c7-2.200 15-1.600 21.500 2M302.800 614.200c6-1.800 12.500-1.200 18 1.800M304 619.600c5-1.400 10-1 14.500 1.500" stroke="#141a16" stroke-width="2.600" fill="none" stroke-linecap="round"/>
<!-- word -->
<rect x="346" y="599" width="25" height="30" rx="2" fill="#2b7cd3"/><rect x="346" y="599" width="25" height="8" fill="#41a5ee"/><rect x="346" y="614" width="25" height="8" fill="#185abd"/><rect x="346" y="622" width="25" height="7" rx="1" fill="#103f91"/><rect x="337" y="605" width="18" height="18" rx="2" fill="#1a5dbe"/><text x="346" y="619" text-anchor="middle" font-family="Liberation Sans" font-weight="bold" font-size="13" fill="#fff">W</text>
<!-- powerpoint -->
<circle cx="400" cy="614" r="15.500" fill="#d35230"/><path d="M400 598.500a15.500 15.500 0 0 1 15.500 15.500h-15.500z" fill="#ff8f6b"/><path d="M400 598.500a15.500 15.500 0 0 0-15.500 15.500h15.500z" fill="#ed6c47"/><rect x="379" y="605" width="18" height="18" rx="2" fill="#c43e1c"/><text x="388" y="619" text-anchor="middle" font-family="Liberation Sans" font-weight="bold" font-size="13" fill="#fff">P</text>
<!-- excel -->
<rect x="430" y="599" width="26" height="30" rx="2" fill="#21a366"/><rect x="443" y="599" width="13" height="10" fill="#33c481"/><rect x="430" y="609" width="13" height="10" fill="#107c41"/><rect x="430" y="619" width="26" height="10" rx="1" fill="#185c37"/><rect x="422" y="605" width="18" height="18" rx="2" fill="#107c41"/><text x="431" y="619" text-anchor="middle" font-family="Liberation Sans" font-weight="bold" font-size="13" fill="#fff">X</text>
<!-- chrome -->
<circle cx="481" cy="614" r="17" fill="#e8453c"/><path d="M481 614L466.300 605.500A17 17 0 0 0 475 629.900z" fill="#34a853" transform="rotate(0)"/><path d="M464.600 609a17 17 0 0 0 12 21.500l8-13z" fill="#3aa757"/><path d="M477 630.500a17 17 0 0 0 20.500-20.500h-16z" fill="#fbc116"/><circle cx="481" cy="614" r="7.800" fill="#f4f4f4"/><circle cx="481" cy="614" r="6.200" fill="#4a8af4"/>
<!-- zoom -->
<rect x="506.500" y="597" width="34" height="34" rx="9" fill="#4a8cf7"/><rect x="513" y="608" width="14.500" height="12" rx="2.500" fill="#fff"/><path d="M528.500 612l6-4v12l-6-4z" fill="#fff"/>
<!-- teams -->
<circle cx="570" cy="605" r="4.800" fill="#7b83eb"/><circle cx="578" cy="607" r="3.400" fill="#5059c9"/><rect x="563" y="611" width="14" height="17" rx="4" fill="#7b83eb"/><rect x="573" y="612" width="10" height="13" rx="4" fill="#5059c9"/><rect x="549" y="606" width="16.500" height="16.500" rx="2" fill="#4b53bc"/><text x="557.200" y="618.500" text-anchor="middle" font-family="Liberation Sans" font-weight="bold" font-size="11" fill="#fff">T</text>
<!-- discord -->
<circle cx="607.300" cy="614" r="17.300" fill="#eef0fa"/><circle cx="607.300" cy="614" r="15.300" fill="#6a7fe8"/><path d="M599.500 609.500c5-2.600 11-2.600 16 0 2.500 4 3.500 8 3.200 12.500-2 1.600-4 2.500-6 3l-1.300-2.200c-2.600.8-5.200.8-7.800 0l-1.300 2.200c-2-.5-4-1.400-6-3-.3-4.500.7-8.500 3.200-12.500z" fill="#fff"/><ellipse cx="604.300" cy="616.500" rx="1.900" ry="2.200" fill="#6a7fe8"/><ellipse cx="610.500" cy="616.500" rx="1.900" ry="2.200" fill="#6a7fe8"/>
<circle cx="620.800" cy="602.600" r="6" fill="#e84a50"/><circle cx="620.800" cy="602.600" r="1.200" fill="#fff"/>
<!-- filezilla -->
<rect x="631.500" y="595.500" width="37.500" height="37.500" rx="1" fill="#b3241e" stroke="#8e1c18" stroke-width="1.200" stroke-dasharray="1.500 1.500"/><rect x="634" y="598" width="32.500" height="32.500" fill="#b92a22"/>
<g transform="translate(650.500 614.500) scale(1.280) translate(-652.500 -615.300)"><path d="M641 624l4.200-20h13l-0.900 4.200h-8.300l-0.900 4.200h7l-0.800 3.800h-7l-1.600 7.800z" fill="#fff"/><path d="M652 613h11.500l-0.700 3.300-8.500 7h7.200l-0.800 3.700h-12.700l0.700-3.400 8.400-6.900h-5.900z" fill="#fff"/></g>
<!-- vscode -->
<path d="M703 598l5.500 2.500v27l-5.500 2.500-15.500-14 -6 4.600-2.800-1.800 6-6.800-6-6.800 2.800-1.800 6 4.600z" fill="#3a96dd"/><path d="M703 598l5.500 2.500v27l-5.500 2.500z" fill="#53b0f0"/><path d="M703 606.500v15l-9.500-7.500z" fill="#1a2630"/>
<!-- terminal -->
<rect x="717.500" y="598" width="35" height="32" rx="2.500" fill="#1c1c1c" stroke="#6a6e72" stroke-width="1.300"/><path d="M722.500 603.500l3 2-3 2M727 608h3.500" stroke="#e8e8e8" stroke-width="1.100" fill="none"/>
<!-- virtualbox -->
<ellipse cx="776.500" cy="629.500" rx="8.500" ry="3" fill="#c4ccd8"/>
<path d="M776.500 595.500l16 6.300v17.500l-16 10.200-16-10.200v-17.500z" fill="#e2e8f0"/>
<path d="M763 605.200l12.200 4.800v15.800l-12.200-7.800z" fill="#27478a"/>
<path d="M790 605.200l-12.200 4.800v15.800l12.200-7.800z" fill="#3a66b2"/>
<path d="M776.500 598.300l12 4.700-12 4.700-12-4.700z" fill="#4676be"/>
<path d="M765 612l8 3.500M765 615.500l8 3.500" stroke="#b8c8e4" stroke-width="1.100"/>
<path d="M780 615.500l8-3.500M780 619l8-3.500" stroke="#c8d6ee" stroke-width="1.100"/>
<path d="M771 603h11M776.500 600.500v5" stroke="#dfe8f6" stroke-width="1.200"/>
<!-- settings -->
<rect x="802" y="597.500" width="34" height="33" fill="#9a9c9e"/><rect x="803" y="598.500" width="32" height="31" fill="#b4b6b8"/><circle cx="819" cy="614" r="13.500" fill="#4a4c4e"/><circle cx="819" cy="614" r="13.500" fill="none" stroke="#6a6c6e" stroke-width="2.500" stroke-dasharray="2 1.500"/><circle cx="819" cy="614" r="9.500" fill="#8a8c8e"/><circle cx="819" cy="614" r="3" fill="#3a3c3e"/><path d="M819 614v-9.500M819 614l8.200 4.800M819 614l-8.200 4.800" stroke="#3a3c3e" stroke-width="2.400"/>
<!-- android studio -->
<circle cx="861.300" cy="614" r="17" fill="#5fd07a"/><path d="M844.300 614a17 17 0 0 1 34 0z" fill="#6fdc88"/><rect x="857" y="604" width="8.600" height="11" rx="1.500" fill="#1f3b4a"/><rect x="859.800" y="600.500" width="3" height="4" fill="#1f3b4a"/><circle cx="861.300" cy="609.500" r="1.800" fill="#6fdc88"/><path d="M861.300 613l-9 16.500M861.300 613l9 16.500" stroke="#e4ecf4" stroke-width="2.600" stroke-linecap="round"/><path d="M855.500 622.500c4 2.500 8 2.500 11.600 0" stroke="#e4ecf4" stroke-width="1.500" fill="none"/>
<!-- emulator -->
<circle cx="903.200" cy="614" r="17.500" fill="#fafafa"/><circle cx="911.500" cy="607" r="3" fill="#5c7df0"/><circle cx="896.500" cy="620.500" r="3" fill="#5c7df0"/><g transform="rotate(40 903.200 612.500)"><rect x="894.200" y="606" width="18" height="12" rx="1.500" fill="#2a3c8a"/><rect x="895.700" y="607.200" width="15" height="9.600" fill="#7fd48a"/><path d="M903 607.200h7.700v9.600h-3z" fill="#bfe0f4"/></g>
<!-- divider + trash -->
<path d="M934.600 597v34" stroke="#4a565e" stroke-width="1"/>
<path d="M950.500 599.500h28l-3 29c-4 2.200-18 2.200-22 0z" fill="url(#tr)" opacity="0.800"/><ellipse cx="964.500" cy="599.800" rx="14" ry="2.600" fill="#888e92"/><ellipse cx="964.500" cy="600" rx="12.500" ry="1.800" fill="#5f6569"/>
<circle cx="58.6" cy="638.300" r="1" fill="#b8bcc0"/><circle cx="185.4" cy="638.300" r="1" fill="#b8bcc0"/><circle cx="227.6" cy="638.300" r="1" fill="#b8bcc0"/><circle cx="269.2" cy="638.300" r="1" fill="#b8bcc0"/><circle cx="354" cy="638.300" r="1" fill="#b8bcc0"/><circle cx="481" cy="638.300" r="1" fill="#b8bcc0"/><circle cx="564.6" cy="638.300" r="1" fill="#b8bcc0"/><circle cx="607.3" cy="638.300" r="1" fill="#b8bcc0"/><circle cx="861.3" cy="638.300" r="1" fill="#b8bcc0"/><circle cx="903.2" cy="638.300" r="1" fill="#b8bcc0"/>
</svg>

</div></body></html>
